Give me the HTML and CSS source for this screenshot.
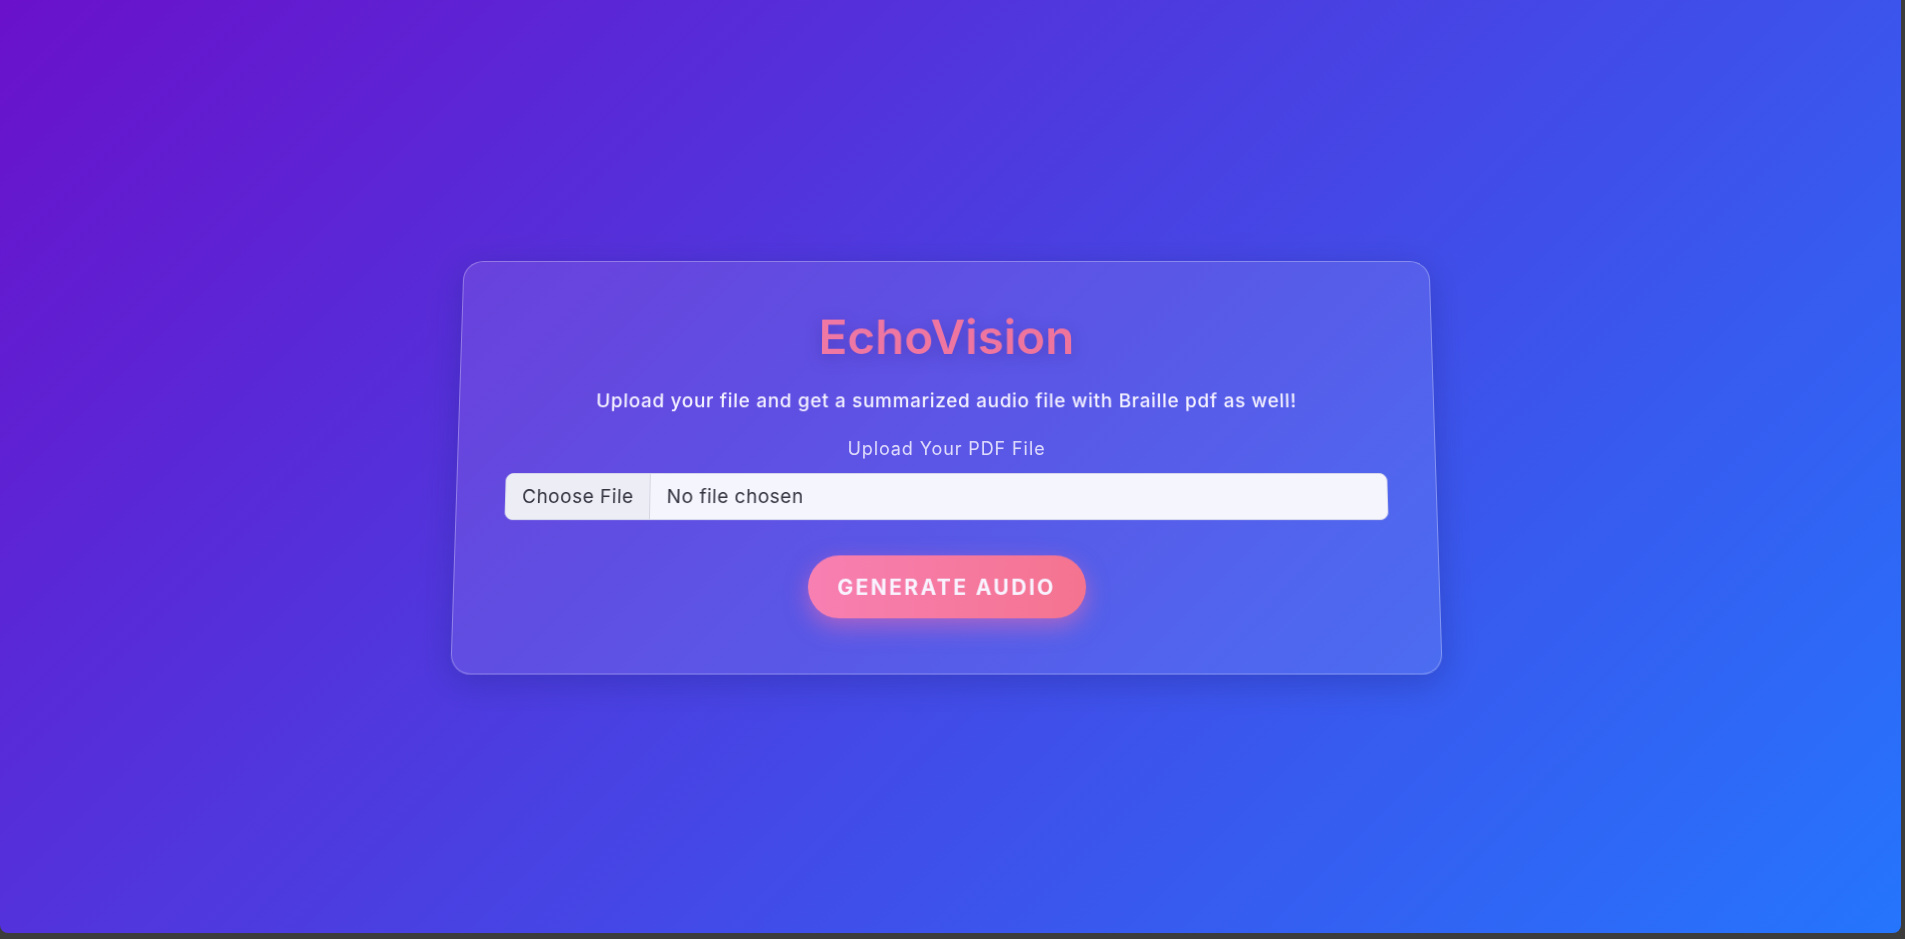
FILE: index.html
```html
<!DOCTYPE html>
<html lang="en">
<head>
<meta charset="UTF-8">
<title>EchoVision</title>
<link rel="stylesheet" href="styles.css">
</head>
<body>
<div class="screen">
  <main class="stage">
    <section class="card">
      <h1 class="title">EchoVision</h1>
      <p class="subtitle">Upload your file and get a summarized audio file with Braille pdf as well!</p>
      <form class="form">
        <div class="field-label">Upload Your PDF File</div>
        <label class="file">
          <span class="file-btn">Choose File</span>
          <span class="file-name">No file chosen</span>
        </label>
        <button type="button" class="generate">GENERATE AUDIO</button>
      </form>
    </section>
  </main>
</div>
</body>
</html>
```

FILE: styles.css
```css
* { box-sizing: border-box; }
html, body {
  margin: 0;
  padding: 0;
  background: #3c3c3c;
  height: 939px;
  overflow: hidden;
}
body {
  font-family: "Inter", "Noto Sans", sans-serif;
}
.screen {
  width: 1901px;
  height: 933px;
  border-radius: 0 0 8px 8px;
  overflow: hidden;
  background: linear-gradient(135deg, #6a11cb 0%, #2575fc 100%);
}
.stage {
  height: 100%;
  display: flex;
  align-items: center;
  justify-content: center;
  padding: 0 8px 3px 0;
}
.card {
  width: 979px;
  padding: 49px 48px 54px;
  border-radius: 20px;
  border: 1px solid rgba(255, 255, 255, 0.3);
  background: rgba(255, 255, 255, 0.1);
  box-shadow: 0 8px 32px rgba(31, 38, 135, 0.37);
  transform: perspective(800px) rotateX(3deg);
  text-align: center;
}
.title {
  margin: 0 0 24px;
  font-size: 48px;
  line-height: 55px;
  font-weight: 600;
  background: linear-gradient(90deg, #f07bac 0%, #ec7094 100%);
  -webkit-background-clip: text;
  background-clip: text;
  color: transparent;
  filter: drop-shadow(0 4px 8px rgba(20, 10, 90, 0.25));
}
.subtitle {
  margin: 0 0 22px;
  font-size: 19px;
  line-height: 27px;
  font-weight: 500;
  letter-spacing: 0.7px;
  color: #f4f1ff;
}
.form {
  display: flex;
  flex-direction: column;
  align-items: center;
}
.field-label {
  font-size: 18px;
  line-height: 25px;
  letter-spacing: 0.9px;
  color: rgba(240, 236, 255, 0.9);
  margin-bottom: 12px;
}
.file {
  width: 100%;
  height: 47px;
  display: flex;
  align-items: stretch;
  background: #f5f5fd;
  border: 1px solid #d3d4ec;
  border-radius: 8px;
  overflow: hidden;
  font-size: 19px;
  letter-spacing: 0.5px;
  color: #333340;
  text-align: left;
}
.file-btn {
  display: flex;
  align-items: center;
  padding: 0 16px;
  background: #ededf5;
  border-right: 1px solid #d6d6e2;
}
.file-name {
  display: flex;
  align-items: center;
  padding-left: 16px;
}
.generate {
  margin-top: 35px;
  width: 276px;
  height: 62px;
  border: none;
  border-radius: 31px;
  background: linear-gradient(90deg, #f77fb2 0%, #f4738f 100%);
  box-shadow: 0 8px 22px rgba(250, 110, 170, 0.5);
  color: #f8f3ff;
  font-family: inherit;
  font-size: 21px;
  font-weight: 700;
  letter-spacing: 2.3px;
  cursor: pointer;
}
```
